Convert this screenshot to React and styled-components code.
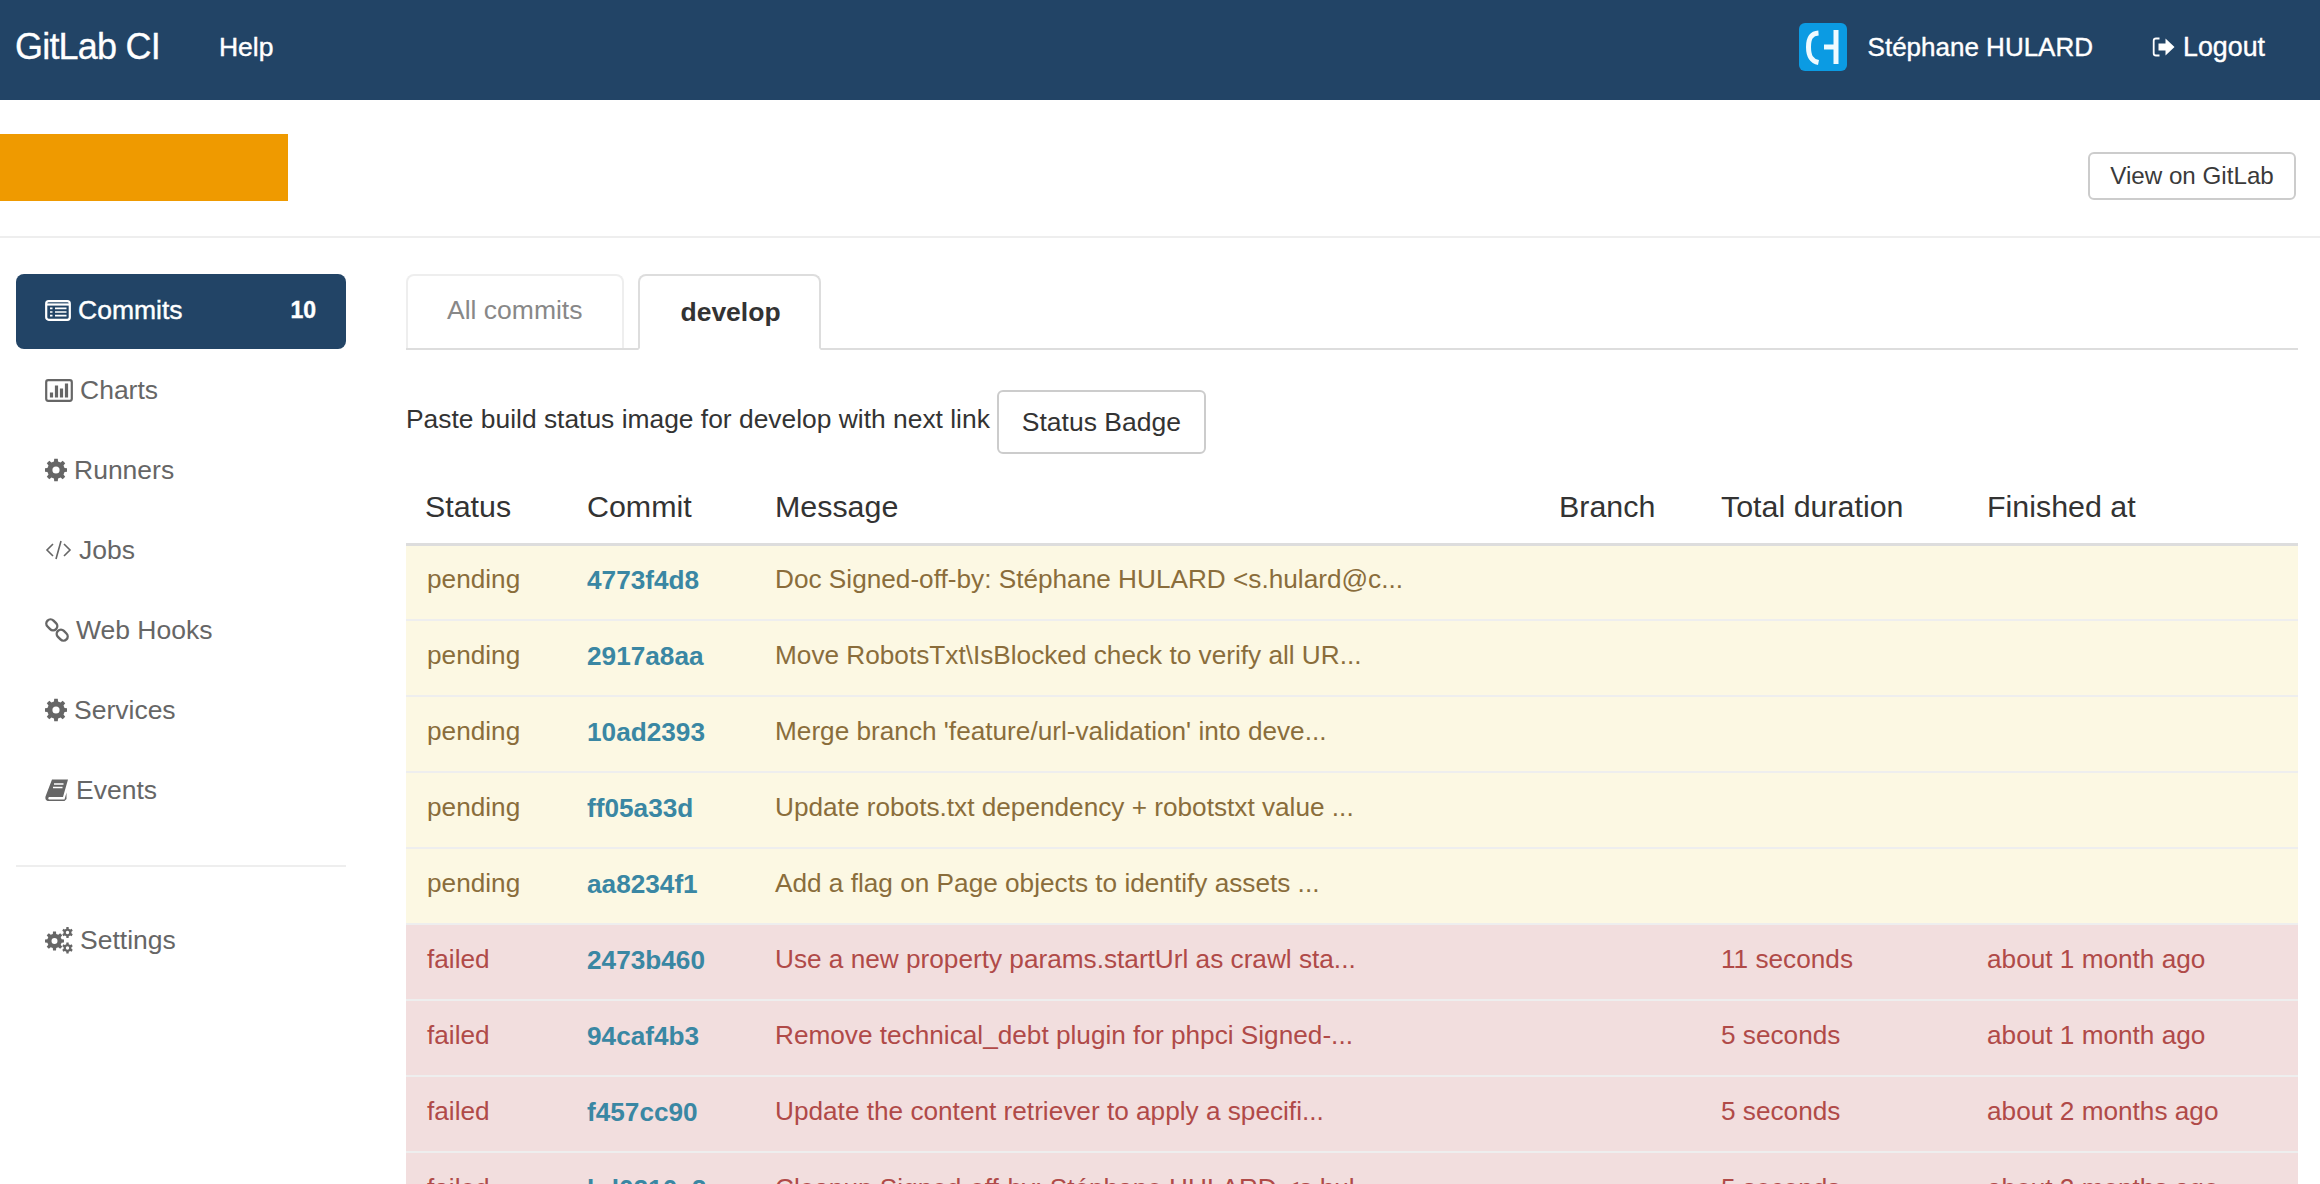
import React from "react";
import styled, { createGlobalStyle } from "styled-components";

const Global = createGlobalStyle`
  html, body { margin: 0; padding: 0; height: 1184px; overflow: hidden; background: #fff; }
  body { font-family: "Liberation Sans", Arial, sans-serif; font-size: 26px; color: #333; }
  * { box-sizing: border-box; }
`;

const Page = styled.div`
  width: 2320px;
  height: 1184px;
  overflow: hidden;
`;

const TopBar = styled.header`
  height: 100px;
  background: #224466;
  display: flex;
  align-items: center;
  color: #fff;
  padding: 0 55px 6px 15px;
`;

const Brand = styled.span`
  font-size: 36px;
  letter-spacing: -0.8px;
  -webkit-text-stroke: 0.3px #fff;
`;

const HelpLink = styled.span`
  font-size: 26.5px;
  margin-left: 59px;
  -webkit-text-stroke: 0.4px #fff;
`;

const Spacer = styled.div`
  flex: 1;
`;

const Avatar = styled.svg`
  width: 48px;
  height: 48px;
  margin-right: 21px;
`;

const UserLink = styled.span`
  font-size: 26px;
  -webkit-text-stroke: 0.4px #fff;
`;

const LogoutLink = styled.span`
  display: flex;
  align-items: center;
  gap: 7px;
  margin-left: 59px;
  font-size: 26.8px;
  -webkit-text-stroke: 0.4px #fff;
`;

const LogoutIcon = styled.svg`
  width: 24px;
  height: 22px;
`;

const ProjectBar = styled.div`
  height: 138px;
  border-bottom: 2px solid #eee;
  display: flex;
  align-items: flex-start;
  justify-content: space-between;
  padding: 34px 24px 0 0;
`;

const ProjectLogo = styled.div`
  width: 288px;
  height: 67px;
  background: #ef9a00;
`;

const ViewButton = styled.div`
  margin-top: 18px;
  width: 208px;
  height: 48px;
  border: 2px solid #ccc;
  border-radius: 6px;
  display: flex;
  align-items: center;
  justify-content: center;
  font-size: 24.2px;
  color: #3a3a3a;
`;

const Body = styled.div`
  display: flex;
  padding-top: 36px;
`;

const Side = styled.nav`
  width: 330px;
  margin-left: 16px;
  flex: none;
`;

const NavItem = styled.div`
  height: ${(p) => (p.$active ? "75px" : "80px")};
  margin-bottom: ${(p) => (p.$active ? "1px" : "0")};
  display: flex;
  align-items: center;
  padding: ${(p) => (p.$active ? "0 30px 3px 29px" : "0 30px 0 29px")};
  gap: 7px;
  border-radius: 8px;
  background: ${(p) => (p.$active ? "#224466" : "transparent")};
  color: ${(p) => (p.$active ? "#fff" : "#666")};
  font-size: 26.5px;
  -webkit-text-stroke: ${(p) => (p.$active ? "0.4px #fff" : "0")};
`;

const NavIcon = styled.svg`
  width: ${(p) => p.$w}px;
  height: 28px;
  flex: none;
`;

const Count = styled.span`
  margin-left: auto;
  font-size: 23px;
  font-weight: 700;
`;

const NavDivider = styled.div`
  height: 2px;
  background: #eee;
  margin: 35px 0 33px;
`;

const Main = styled.main`
  margin-left: 60px;
  width: 1892px;
  flex: none;
`;

const Tabs = styled.div`
  display: flex;
  gap: 14px;
  height: 76px;
  border-bottom: 2px solid #ddd;
  padding-right: 2px;
`;

const Tab = styled.div`
  height: ${(p) => (p.$active ? "76px" : "74px")};
  padding: ${(p) => (p.$active ? "0 38px 0 40px" : "0 40px 4px 39px")};
  border: 2px solid ${(p) => (p.$active ? "#ddd" : "#eee")};
  border-bottom: ${(p) => (p.$active ? "2px solid #fff" : "0")};
  border-radius: 8px 8px 0 0;
  display: flex;
  align-items: center;
  background: #fff;
  font-size: 26.5px;
  font-weight: ${(p) => (p.$active ? 700 : 400)};
  color: ${(p) => (p.$active ? "#333" : "#888")};
`;

const BadgeRow = styled.div`
  display: flex;
  align-items: flex-start;
  margin-top: 40px;
  height: 64px;
`;

const BadgeText = styled.span`
  font-size: 26.4px;
  line-height: 58px;
  color: #333;
  margin-right: 7px;
`;

const BadgeButton = styled.div`
  width: 209px;
  height: 64px;
  border: 2px solid #ccc;
  border-radius: 6px;
  display: flex;
  align-items: center;
  justify-content: center;
  font-size: 26.5px;
  color: #333;
`;

const Table = styled.table`
  width: 1892px;
  margin-top: 28px;
  border-collapse: collapse;
  table-layout: fixed;
  font-size: 26.2px;
`;

const Th = styled.th`
  height: 62px;
  text-align: left;
  font-weight: 400;
  font-size: 30.4px;
  color: #333;
  padding: 0 0 12px 19px;
  border-bottom: 3px solid #ddd;
`;

const Row = styled.tr`
  background: ${(p) => (p.$kind === "failed" ? "#f2dede" : "#fcf8e3")};
  color: ${(p) => (p.$kind === "failed" ? "#b04a48" : "#8a6d3b")};
`;

const Td = styled.td`
  height: 76px;
  padding: 0 0 5px ${(p) => p.$pad || 20}px;
  border-top: 2px solid #eee;
  white-space: nowrap;
  overflow: hidden;
`;

const CommitLink = styled.span`
  position: relative;
  top: 1px;
  color: #3a87a3;
  font-weight: 700;
`;

const commits = [
  ["pending", "4773f4d8", "Doc Signed-off-by: Stéphane HULARD <s.hulard@c...", "", ""],
  ["pending", "2917a8aa", "Move RobotsTxt\\IsBlocked check to verify all UR...", "", ""],
  ["pending", "10ad2393", "Merge branch 'feature/url-validation' into deve...", "", ""],
  ["pending", "ff05a33d", "Update robots.txt dependency + robotstxt value ...", "", ""],
  ["pending", "aa8234f1", "Add a flag on Page objects to identify assets ...", "", ""],
  ["failed", "2473b460", "Use a new property params.startUrl as crawl sta...", "11 seconds", "about 1 month ago"],
  ["failed", "94caf4b3", "Remove technical_debt plugin for phpci Signed-...", "5 seconds", "about 1 month ago"],
  ["failed", "f457cc90", "Update the content retriever to apply a specifi...", "5 seconds", "about 2 months ago"],
  ["failed", "bd0210c2", "Cleanup Signed-off-by: Stéphane HULARD <s.hul...", "5 seconds", "about 2 months ago"],
];

function gearPath(cx, cy, outer, inner, hole, teeth = 8) {
  const pts = [];
  const step = (Math.PI * 2) / teeth;
  for (let i = 0; i < teeth; i++) {
    const a = i * step - Math.PI / 2;
    const w = step * 0.2;
    const base = step * 0.3;
    [[-base, inner], [-w, outer], [w, outer], [base, inner]].forEach(([d, r]) => {
      pts.push(`${(cx + Math.cos(a + d) * r).toFixed(2)} ${(cy + Math.sin(a + d) * r).toFixed(2)}`);
    });
  }
  const ring = `M${cx - hole} ${cy}a${hole} ${hole} 0 1 0 ${hole * 2} 0a${hole} ${hole} 0 1 0 ${-hole * 2} 0Z`;
  return `M${pts.join("L")}Z${ring}`;
}

const ListIcon = () => (
  <NavIcon $w={26} viewBox="0 0 26 28">
    <rect x="1.2" y="5.2" width="23.6" height="18.6" rx="2.5" fill="none" stroke="#fff" strokeWidth="2.2" />
    <path d="M1.5 8.5H24.5" stroke="#fff" strokeWidth="2.2" />
    <path d="M5 12.3h2.5M10 12.3H21.5M5 16h2.5M10 16H21.5M5 19.7h2.5M10 19.7H21.5" stroke="#fff" strokeWidth="1.7" />
  </NavIcon>
);

const ChartIcon = () => (
  <NavIcon $w={28} viewBox="0 0 28 28">
    <rect x="1.2" y="4.2" width="25.6" height="20.6" rx="2" fill="none" stroke="#666" strokeWidth="2.2" />
    <path d="M6.5 21.5V16.5M11.5 21.5V9.5M16.5 21.5V12.5M21.5 21.5V7.5" stroke="#666" strokeWidth="3.2" />
  </NavIcon>
);

const GearIcon = () => (
  <NavIcon $w={22} viewBox="0 0 22 28">
    <path d={gearPath(11, 14, 11.4, 8.8, 3.6)} fill="#666" fillRule="evenodd" />
  </NavIcon>
);

const CodeIcon = () => (
  <NavIcon $w={27} viewBox="0 0 27 28">
    <path d="M8 8L2 14L8 20M19 8L25 14L19 20M16 5L11 23" fill="none" stroke="#666" strokeWidth="1.6" />
  </NavIcon>
);

const LinkIcon = () => (
  <NavIcon $w={24} viewBox="0 0 24 28">
    <g fill="none" stroke="#666" strokeWidth="2.4">
      <rect x="-6" y="-4.2" width="12" height="8.4" rx="4.2" transform="translate(6.8 8.8) rotate(45)" />
      <rect x="-6" y="-4.2" width="12" height="8.4" rx="4.2" transform="translate(17.2 19.2) rotate(45)" />
    </g>
  </NavIcon>
);

const BookIcon = () => (
  <NavIcon $w={24} viewBox="0 0 24 28">
    <path d="M7 3.5H23L18 21H4.5C3 21 2.8 23.5 4.5 23.5H19.5L21.5 16.5V23L19.5 25H4C1 25 0 23 0.5 20.5Z" fill="#666" />
    <path d="M9 8H18.5M8 11.5H17.5" stroke="#fff" strokeWidth="1.4" />
  </NavIcon>
);

const CogsIcon = () => (
  <NavIcon $w={28} viewBox="0 0 28 28">
    <path d={gearPath(9.5, 15, 9.6, 7.3, 3)} fill="#666" fillRule="evenodd" />
    <path d={gearPath(22.5, 6.5, 5.5, 4, 1.7, 6)} fill="#666" fillRule="evenodd" />
    <path d={gearPath(22.5, 22, 5.5, 4, 1.7, 6)} fill="#666" fillRule="evenodd" />
  </NavIcon>
);

const navTop = [
  [ChartIcon, "Charts"],
  [GearIcon, "Runners"],
  [CodeIcon, "Jobs"],
  [LinkIcon, "Web Hooks"],
  [GearIcon, "Services"],
  [BookIcon, "Events"],
];

export default function App() {
  return (
    <Page>
      <Global />
      <TopBar>
        <Brand>GitLab CI</Brand>
        <HelpLink>Help</HelpLink>
        <Spacer />
        <Avatar viewBox="0 0 48 48">
          <rect width="48" height="48" rx="6" fill="#0b9be3" />
          <path d="M19.5 10 C12 10.5 9.5 15 9.5 24 C9.5 33 12 38 19.5 39.5" fill="none" stroke="#eefaff" strokeWidth="5" />
          <path d="M37 7 V41 M25 24 H37" fill="none" stroke="#eefaff" strokeWidth="5" />
        </Avatar>
        <UserLink>Stéphane HULARD</UserLink>
        <LogoutLink>
          <LogoutIcon viewBox="0 0 23 22">
            <path d="M7 2.5H3.5C2.2 2.5 1.2 3.5 1.2 4.8V17.2C1.2 18.5 2.2 19.5 3.5 19.5H7" fill="none" stroke="#fff" strokeWidth="1.8" />
            <path d="M6 7.5H13V2.5L22 11L13 19.5V14.5H6Z" fill="#fff" />
          </LogoutIcon>
          Logout
        </LogoutLink>
      </TopBar>
      <ProjectBar>
        <ProjectLogo />
        <ViewButton>View on GitLab</ViewButton>
      </ProjectBar>
      <Body>
        <Side>
          <NavItem $active><ListIcon />Commits<Count>10</Count></NavItem>
          {navTop.map(([Icon, label]) => (
            <NavItem key={label}><Icon />{label}</NavItem>
          ))}
          <NavDivider />
          <NavItem><CogsIcon />Settings</NavItem>
        </Side>
        <Main>
          <Tabs>
            <Tab>All commits</Tab>
            <Tab $active>develop</Tab>
          </Tabs>
          <BadgeRow>
            <BadgeText>Paste build status image for develop with next link</BadgeText>
            <BadgeButton>Status Badge</BadgeButton>
          </BadgeRow>
          <Table>
            <colgroup>
              <col style={{ width: 162 }} />
              <col style={{ width: 188 }} />
              <col style={{ width: 784 }} />
              <col style={{ width: 162 }} />
              <col style={{ width: 266 }} />
              <col />
            </colgroup>
            <thead>
              <tr>
                <Th>Status</Th>
                <Th>Commit</Th>
                <Th>Message</Th>
                <Th>Branch</Th>
                <Th>Total duration</Th>
                <Th>Finished at</Th>
              </tr>
            </thead>
            <tbody>
              {commits.map((c) => (
                <Row key={c[1]} $kind={c[0]}>
                  <Td $pad={21}>{c[0]}</Td>
                  <Td $pad={19}><CommitLink>{c[1]}</CommitLink></Td>
                  <Td $pad={19}>{c[2]}</Td>
                  <Td />
                  <Td $pad={19}>{c[3]}</Td>
                  <Td $pad={19}>{c[4]}</Td>
                </Row>
              ))}
            </tbody>
          </Table>
        </Main>
      </Body>
    </Page>
  );
}
